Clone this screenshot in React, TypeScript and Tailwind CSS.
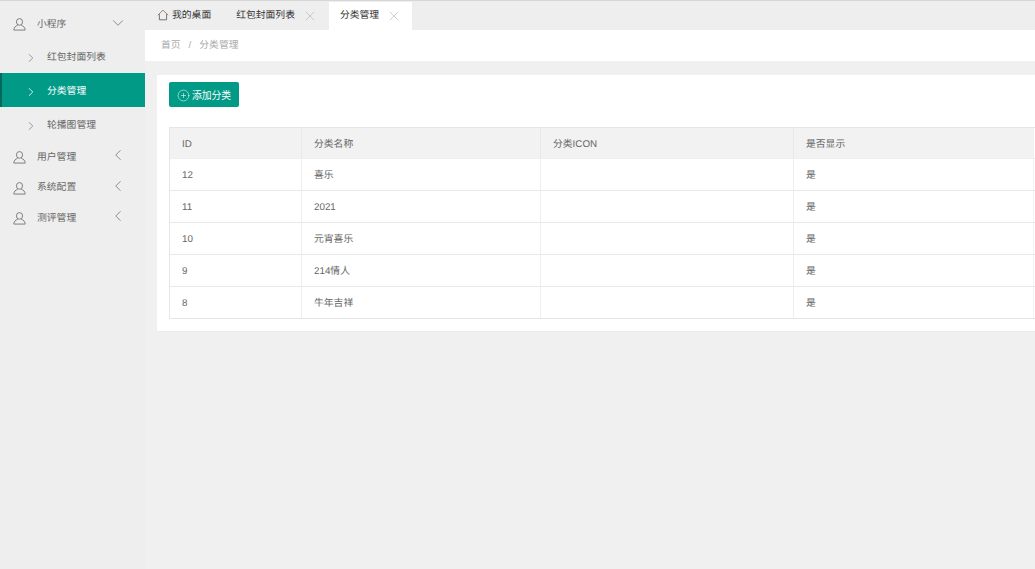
import { ChevronDown, ChevronLeft, ChevronRight, CirclePlus, X } from 'lucide-react';

const FONT = "font-['Liberation_Sans','Noto_Sans_CJK_SC',sans-serif]";

const CATEGORIES = [
  { id: 12, name: '喜乐' },
  { id: 11, name: '2021' },
  { id: 10, name: '元宵喜乐' },
  { id: 9, name: '214情人' },
  { id: 8, name: '牛年吉祥' },
];

const UserIcon = () => (
  <svg viewBox="0 0 14 14" className="w-[13px] h-[13px] shrink-0 mr-[1px]" fill="none" stroke="#777" strokeWidth="1">
    <ellipse cx="7" cy="4.2" rx="3.3" ry="3.6" />
    <path d="M5 8C3 8.6.9 10 .9 13h12.2c0-3-2.1-4.4-4.1-5" />
  </svg>
);

const MenuGroup = ({ label, open = false, height }: { label: string; open?: boolean; height: string }) => (
  <div className={`flex items-center ${height} pt-[2px] pl-[13px] pr-[18px] text-[#666]`}>
    <UserIcon />
    <span className="ml-[10px] flex-1">{label}</span>
    {open ? (
      <ChevronDown className="w-[18px] h-[18px] -mt-[3px] text-[#777]" strokeWidth={1.1} />
    ) : (
      <ChevronLeft className="w-[18px] h-[18px] -mt-[5px] text-[#777]" strokeWidth={1.1} />
    )}
  </div>
);

const SubItem = ({ label, active = false }: { label: string; active?: boolean }) => (
  <div
    className={`flex items-center h-[34px] pt-[3px] ${
      active ? 'bg-[#009a87] border-l-2 border-[#00695c] pl-[22px] text-white' : 'pl-[24px] text-[#666]'
    }`}
  >
    <ChevronRight className={`w-[14px] h-[14px] ${active ? 'text-white' : 'text-[#888]'}`} strokeWidth={1.4} />
    <span className="ml-[9px]">{label}</span>
  </div>
);

const Tab = ({ label, active = false }: { label: string; active?: boolean }) => (
  <div className={`flex items-center h-[28px] text-[#333] ${active ? 'bg-white pl-[11px] pr-[10px]' : 'pl-[12px] pr-[11px]'}`}>
    <span>{label}</span>
    <X className="w-[16px] h-[16px] ml-[7px] text-[#bbb]" strokeWidth={1.1} />
  </div>
);

const Cell = ({ width, children, head = false, last = false }: { width: string; children?: React.ReactNode; head?: boolean; last?: boolean }) => (
  <div className={`flex items-center ${width} pl-[12px] ${head ? 'pt-[3px] bg-[#f2f2f2] border-r border-[#e9e9e9]' : 'pt-[2px] border-r border-[#eeeeee]'} ${last ? 'border-[#f2f2f2]' : ''}`}>
    {children}
  </div>
);

export default function App() {
  return (
    <div className={`flex flex-col h-[569px] w-[1035px] overflow-hidden bg-[#f0f0f0] border-t border-[#d6d6d6] text-[9.8px] leading-none [text-rendering:geometricPrecision] ${FONT}`}>
      <div className="flex flex-1 min-h-0">
        {/* Sidebar */}
        <aside className="w-[145px] shrink-0 bg-[#eeeeee] pt-[7px]">
          <MenuGroup label="小程序" open height="h-[31px]" />
          <SubItem label="红包封面列表" />
          <SubItem label="分类管理" active />
          <SubItem label="轮播图管理" />
          <MenuGroup label="用户管理" height="h-[31px]" />
          <MenuGroup label="系统配置" height="h-[30px]" />
          <MenuGroup label="测评管理" height="h-[31px]" />
        </aside>

        <main className="flex-1 min-w-0">
          {/* Tabs */}
          <div className="flex items-center h-[29px] pt-[1px] bg-[#eeeeef]">
            <div className="flex items-center h-[28px] pl-[12px] pr-[13px] text-[#333]">
              <svg viewBox="0 0 12 12" className="w-[12px] h-[12px] -mt-[3px]" fill="none" stroke="#a5734f" strokeWidth="0.9">
                <path d="M0.8 6.2 6 1.2l5.2 5" />
                <path d="M2.4 5.2v5.6h7.2V5.2" stroke="#666" />
              </svg>
              <span className="ml-[3px]">我的桌面</span>
            </div>
            <Tab label="红包封面列表" />
            <Tab label="分类管理" active />
          </div>

          {/* Breadcrumb */}
          <div className="flex items-center h-[31px] pl-[16px] bg-white text-[#aaa]">
            <span>首页</span>
            <span className="mx-[8px]">/</span>
            <span>分类管理</span>
          </div>

          {/* Card */}
          <div className="ml-[12px] mt-[14px] h-[257px] bg-white border-b border-[#ebebeb] pl-[12px] pt-[7px]">
            <button className="flex items-center justify-center w-[70px] h-[25px] pt-[2px] rounded-[2px] bg-[#009a87] text-white">
              <CirclePlus className="w-[13px] h-[13px] mr-[2px]" strokeWidth={1} />
              添加分类
            </button>

            <div className="mt-[20px] w-[866px] border-y border-l border-[#e6e6e6] text-[#666]">
              <div className="flex h-[31px] border-b border-[#eeeeee]">
                <Cell width="w-[132px]" head>ID</Cell>
                <Cell width="w-[239px]" head>分类名称</Cell>
                <Cell width="w-[253px]" head>分类ICON</Cell>
                <Cell width="w-[240px]" head last>是否显示</Cell>
              </div>
              {CATEGORIES.map((c, i) => (
                <div key={c.id} className={`flex ${i < CATEGORIES.length - 1 ? 'h-[32px] border-b border-[#e9e9e9]' : 'h-[31px]'}`}>
                  <Cell width="w-[132px]">{c.id}</Cell>
                  <Cell width="w-[239px]">{c.name}</Cell>
                  <Cell width="w-[253px]" />
                  <Cell width="w-[240px]" last>是</Cell>
                </div>
              ))}
            </div>
          </div>
        </main>
      </div>
    </div>
  );
}
